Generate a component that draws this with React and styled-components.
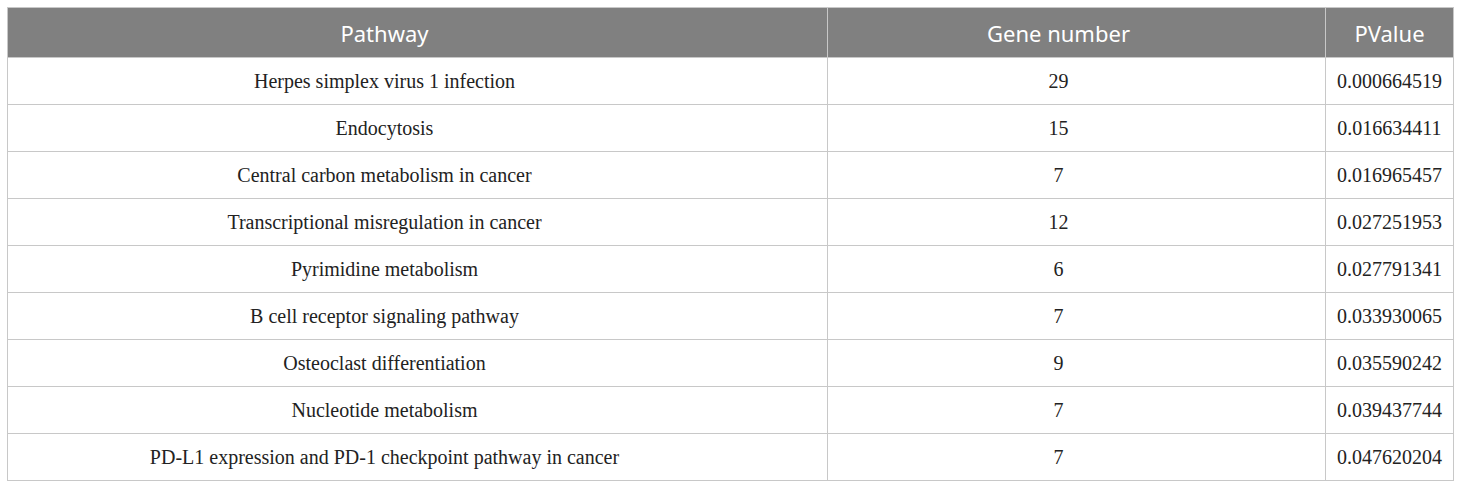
import React from 'react'
import styled, { createGlobalStyle } from 'styled-components'

const GlobalStyle = createGlobalStyle`
  html, body {
    margin: 0;
    padding: 0;
    background: #ffffff;
  }
`

const Page = styled.div`
  padding: 7px;
`

const Table = styled.table`
  width: 1446px;
  border-collapse: collapse;
  table-layout: fixed;
  border: 1px solid #c8c8c8;
`

const HeadCell = styled.th`
  height: 49px;
  padding: 0 ${(p) => p.$shift || 0}px 0 0;
  background: #808080;
  color: #ffffff;
  font-family: 'Noto Sans', 'Open Sans', sans-serif;
  font-weight: 400;
  font-size: 22px;
  text-align: center;
  border: 1px solid #c8c8c8;
  border-top: none;
`

const Cell = styled.td`
  height: 46px;
  padding: 0 ${(p) => p.$shift || 0}px 0 0;
  color: #222222;
  font-family: 'Liberation Serif', 'Times New Roman', serif;
  font-size: 20px;
  text-align: center;
  border: 1px solid #c8c8c8;
`

const rows = [
  ['Herpes simplex virus 1 infection', '29', '0.000664519'],
  ['Endocytosis', '15', '0.016634411'],
  ['Central carbon metabolism in cancer', '7', '0.016965457'],
  ['Transcriptional misregulation in cancer', '12', '0.027251953'],
  ['Pyrimidine metabolism', '6', '0.027791341'],
  ['B cell receptor signaling pathway', '7', '0.033930065'],
  ['Osteoclast differentiation', '9', '0.035590242'],
  ['Nucleotide metabolism', '7', '0.039437744'],
  ['PD-L1 expression and PD-1 checkpoint pathway in cancer', '7', '0.047620204'],
]

const App = () => (
  <>
    <GlobalStyle />
    <Page>
      <Table>
        <colgroup>
          <col style={{ width: 820 }} />
          <col style={{ width: 498 }} />
          <col style={{ width: 128 }} />
        </colgroup>
        <thead>
          <tr>
            <HeadCell $shift={66}>Pathway</HeadCell>
            <HeadCell $shift={36}>Gene number</HeadCell>
            <HeadCell>PValue</HeadCell>
          </tr>
        </thead>
        <tbody>
          {rows.map(([name, genes, p]) => (
            <tr key={name}>
              <Cell $shift={66}>{name}</Cell>
              <Cell $shift={36}>{genes}</Cell>
              <Cell>{p}</Cell>
            </tr>
          ))}
        </tbody>
      </Table>
    </Page>
  </>
)

export default App
